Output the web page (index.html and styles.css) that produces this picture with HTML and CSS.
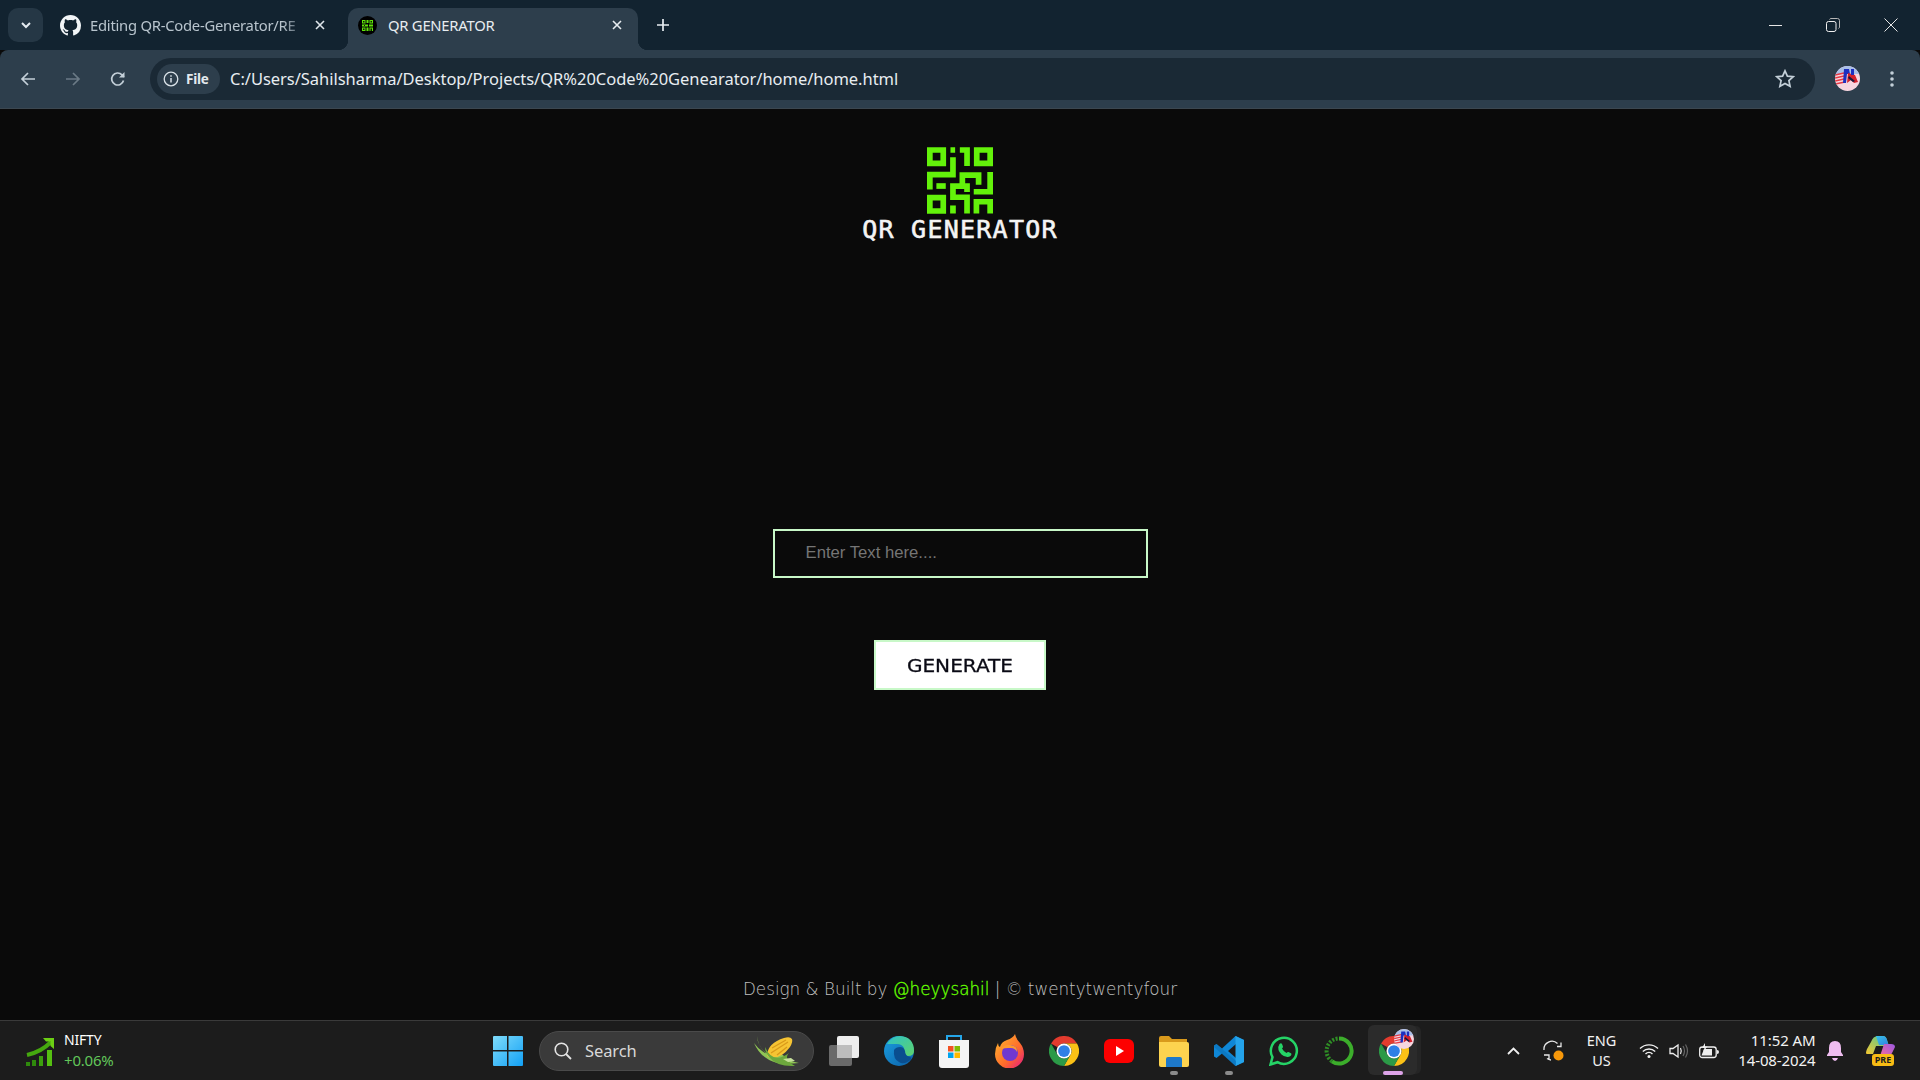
FILE: index.html
```html
<!DOCTYPE html>
<html lang="en">
<head>
<meta charset="utf-8">
<title>QR GENERATOR</title>
<link rel="stylesheet" href="styles.css">
</head>
<body>
<svg class="defs" width="0" height="0" aria-hidden="true">
  <symbol id="chrome" viewBox="0 0 48 48">
    <path fill="#e33b2e" d="M3.2 12A24 24 0 0 1 44.8 12H24A12 12 0 0 0 13.6 18Z"/>
    <path fill="#fbc116" d="M44.8 12A24 24 0 0 1 24 48L34.4 30A12 12 0 0 0 34.4 18 12 12 0 0 0 24 12Z"/>
    <path fill="#2b9a47" d="M24 48A24 24 0 0 1 3.2 12L13.6 30A12 12 0 0 0 34.4 30Z"/>
    <circle cx="24" cy="24" r="12" fill="#fff"/>
    <circle cx="24" cy="24" r="9.4" fill="#2f7fe6"/>
  </symbol>
  <symbol id="avatar" viewBox="0 0 25 25">
    <clipPath id="avclip"><circle cx="12.5" cy="12.5" r="12.5"/></clipPath>
    <g clip-path="url(#avclip)">
      <rect width="25" height="25" fill="#f6d5df"/>
      <rect width="25" height="8" fill="#a9bfe8"/>
      <path stroke="#e63a45" stroke-width="1.5" d="M0 9 9 7M0 12 9 10M0 15 9 13M0 18 10 16"/>
      <path fill="#1c2fc0" d="M9 3h5l1 5h-3l-1 9H8z"/>
      <path fill="#d3202c" d="M13 7l7 2 3 7-4 1-3-3-4 3z"/>
      <path fill="#1c2fc0" d="M16 3h3v6h-3z"/>
      <path fill="#15193f" d="M14 10l6 5-2 1-5-4z"/>
    </g>
  </symbol>
</svg>

<header class="tabstrip">
  <button class="tab-search" aria-label="Search tabs">
    <svg width="12" height="8" viewBox="0 0 12 8"><path d="M2 2l4 4 4-4" fill="none" stroke="#e4ebf0" stroke-width="2"/></svg>
  </button>
  <div class="tab tab-idle">
    <svg class="fav-gh" viewBox="0 0 16 16" width="21" height="21"><path fill="#f2f5f7" d="M8 0C3.58 0 0 3.58 0 8c0 3.54 2.29 6.53 5.47 7.59.4.07.55-.17.55-.38 0-.19-.01-.82-.01-1.49-2.01.37-2.53-.49-2.69-.94-.09-.23-.48-.94-.82-1.13-.28-.15-.68-.52-.01-.53.63-.01 1.08.58 1.23.82.72 1.21 1.87.87 2.33.66.07-.52.28-.87.51-1.07-1.78-.2-3.64-.89-3.64-3.95 0-.87.31-1.59.82-2.15-.08-.2-.36-1.02.08-2.12 0 0 .67-.21 2.2.82.64-.18 1.32-.27 2-.27s1.36.09 2 .27c1.53-1.04 2.2-.82 2.2-.82.44 1.1.16 1.92.08 2.12.51.56.82 1.27.82 2.15 0 3.07-1.87 3.75-3.65 3.95.29.25.54.73.54 1.48 0 1.07-.01 1.93-.01 2.2 0 .21.15.46.55.38A8.01 8.01 0 0 0 16 8c0-4.42-3.58-8-8-8z"/></svg>
    <span class="tab-title tab-title-fade">Editing QR-Code-Generator/RE</span>
    <svg class="tab-x" width="10" height="10" viewBox="0 0 10 10"><path d="M1 1l8 8M9 1l-8 8" stroke="#dfe6eb" stroke-width="1.6"/></svg>
  </div>
  <div class="tab tab-active">
    <span class="fav-qr"><svg width="11" height="11" viewBox="0 0 11 11"><path fill="#5fe30a" d="M0 0h3.500v3.500H0zM7.500 0H11v3.500H7.500zM0 7.500h3.500V11H0zM4.500 0h2v3h-2zM0 4.500h6v2H0zM7 4.500h4v2H7zM4.500 7.500h2V11h-2zM7.500 7.500H11V11H7.500z"/><path fill="#0a2000" d="M1 1h1.500v1.500H1zM8.500 1H10v1.500H8.500zM1 8.500h1.500V10H1zM2 5h1v1H2zM8.500 8.500H10V11H8.500z"/></svg></span>
    <span class="tab-title tab-title-on">QR GENERATOR</span>
    <svg class="tab-x" width="10" height="10" viewBox="0 0 10 10"><path d="M1 1l8 8M9 1l-8 8" stroke="#e8edf1" stroke-width="1.6"/></svg>
  </div>
  <svg class="new-tab" width="14" height="14" viewBox="0 0 14 14"><path d="M7 1v12M1 7h12" stroke="#e8edf1" stroke-width="1.7"/></svg>
  <div class="win-controls">
    <svg width="13" height="13" viewBox="0 0 13 13"><path d="M0 6.500h13" stroke="#e6e6e6"/></svg>
    <svg width="14" height="14" viewBox="0 0 14 14"><rect x=".5" y="3.5" width="9.5" height="10" rx="2" fill="none" stroke="#f0f0f0"/><path d="M3.5 1.5Q4 .5 5 .5h6.500q2 0 2 2V9q0 1-1 1.500" fill="none" stroke="#b5b5b5"/></svg>
    <svg width="14" height="14" viewBox="0 0 14 14"><path d="M.5.5l13 13M13.500.5l-13 13" stroke="#e6e6e6"/></svg>
  </div>
</header>

<nav class="toolbar">
  <svg class="nav-ic" width="16" height="16" viewBox="0 0 16 16"><path d="M15 8H2M8 2L2 8l6 6" fill="none" stroke="#c3cfd8" stroke-width="1.7"/></svg>
  <svg class="nav-ic" width="16" height="16" viewBox="0 0 16 16"><path d="M1 8h13M8 2l6 6-6 6" fill="none" stroke="#6b7a86" stroke-width="1.7"/></svg>
  <svg class="nav-ic" width="16" height="16" viewBox="0 0 16 16"><path d="M13.500 9.500A6 6 0 1 1 12 3.800L14 5.800" fill="none" stroke="#c3cfd8" stroke-width="1.7"/><path d="M14.500 1v5.500H9z" fill="#c3cfd8"/></svg>
  <div class="omnibox">
    <div class="chip">
      <svg width="16" height="16" viewBox="0 0 16 16"><circle cx="8" cy="8" r="6.800" fill="none" stroke="#d9e1e7" stroke-width="1.300"/><path d="M8 7v4.500M8 4.200v1.500" stroke="#d9e1e7" stroke-width="1.500"/></svg>
      <span class="chip-text">File</span>
    </div>
    <span class="url">C:/Users/Sahilsharma/Desktop/Projects/QR%20Code%20Genearator/home/home.html</span>
    <svg class="star" width="20" height="19" viewBox="0 0 20 19"><path d="M10 1.800l2.400 5.300 5.800.6-4.300 3.900 1.200 5.700L10 14.400l-5.100 2.900 1.200-5.700L1.800 7.700l5.800-.6z" fill="none" stroke="#c3cfd8" stroke-width="1.700"/></svg>
  </div>
  <svg class="avatar" width="25" height="25"><use href="#avatar"/></svg>
  <svg class="dots" width="4" height="16" viewBox="0 0 4 16"><circle cx="2" cy="2" r="1.800" fill="#c3cfd8"/><circle cx="2" cy="8" r="1.800" fill="#c3cfd8"/><circle cx="2" cy="14" r="1.800" fill="#c3cfd8"/></svg>
</nav>

<main class="page">
  <div class="brand">
    <svg class="qr-logo" width="66" height="67" viewBox="22 16 197 199">
      <g fill="none" stroke="#63f20a" stroke-width="17">
        <path d="M30.500 24.500h40v40h-40zM170.500 24.500h40v40h-40zM30.500 166.500h40v40h-40z"/>
        <path d="M92 24.500h14M120 24.500h21.500V72"/>
        <path d="M99.500 46v52H30.500v44"/>
        <path d="M50 132h28"/>
        <path d="M176 128V99.500H127.500V132H99.500v33.500h42V214"/>
        <path d="M127 132h14.500v18"/>
        <path d="M210.500 90v59h-49"/>
        <path d="M99.500 190v24"/>
        <path d="M169.500 214v-35h41v35"/>
      </g>
    </svg>
    <div class="brand-name">QR GENERATOR</div>
  </div>

  <form class="qr-form">
    <input class="qr-input" type="text" placeholder="Enter Text here....">
    <button class="qr-button" type="button"><span class="qr-button-text">GENERATE</span></button>
  </form>

  <footer class="credit">Design &amp; Built by <span class="credit-link">@heyysahil</span> | © twentytwentyfour</footer>
</main>

<div class="taskbar">
  <div class="widget">
    <svg width="30" height="30" viewBox="0 0 30 30">
      <path d="M2 19Q16 16 26 6" fill="none" stroke="#45a80f" stroke-width="4"/>
      <path d="M18 2h11v11l-3.500-3V5.500H21z" fill="#6ccf14"/>
      <path fill="#2f8a0c" d="M1 26h4v4H1zM7 24h4v6H7z"/>
      <path fill="#3da00e" d="M14 20h4v10h-4z"/>
      <path fill="#55c011" d="M22 14h5v16h-5z"/>
    </svg>
    <div class="widget-text">
      <span class="widget-name">NIFTY</span>
      <span class="widget-val">+0.06%</span>
    </div>
  </div>

  <svg class="start" width="30" height="30" viewBox="0 0 30 30">
    <defs><linearGradient id="winb" x1="0" y1="0" x2="1" y2="1"><stop offset="0" stop-color="#7fdcfb"/><stop offset="1" stop-color="#12a0f5"/></linearGradient></defs>
    <path fill="url(#winb)" d="M1 0h13v14H0V1q0-1 1-1zM15.500 0H29q1 0 1 1v13H15.500zM0 15.500h14V30H1q-1 0-1-1zM15.500 15.500H30V29q0 1-1 1H15.500z"/>
  </svg>

  <div class="search">
    <svg width="18" height="18" viewBox="0 0 18 18"><circle cx="7.500" cy="7.500" r="6.300" fill="none" stroke="#e4e4e4" stroke-width="1.600"/><path d="M12 12l5 5" stroke="#e4e4e4" stroke-width="1.800"/></svg>
    <span class="search-text">Search</span>
    <svg class="corn" width="48" height="32" viewBox="0 0 48 32">
      <path d="M4 1Q5 14 20 24L10 15Q4 8 4 1z" fill="#8cc152"/>
      <path d="M1 8Q8 24 24 28 34 29 46 28 34 26 30 20L12 18Q5 14 1 8z" fill="#8fc455"/>
      <path d="M14 20Q15 8 31 3q6-2 8 1 1 3-2 8-8 11-18 11-4 0-5-3z" fill="#f6c433"/>
      <path d="M19 13l14-8M18 18l17-11M24 20l10-8" stroke="#d99a1a" stroke-width="1.300"/>
      <path d="M12 12Q20 30 36 18 30 24 42 31 24 32 16 22q-4-5-4-10z" fill="#6da83d"/>
      <path d="M30 24l8-1 4 3-7 1z" fill="#c6e09c"/>
    </svg>
  </div>

  <div class="apps">
    <div class="app">
      <svg width="30" height="30" viewBox="0 0 30 30"><rect y="9" width="23" height="21" rx="2" fill="#6a6a6a"/><rect x="8" width="22" height="22" rx="2" fill="#eeeeee"/><rect x="8" y="9" width="15" height="13" fill="#bdbdbd"/></svg>
    </div>
    <div class="app">
      <svg width="30" height="30" viewBox="0 0 30 30">
        <defs>
          <linearGradient id="edgeA" x1="0" y1="0" x2="1" y2="1"><stop offset="0" stop-color="#2fc2c7"/><stop offset="1" stop-color="#5ed36b"/></linearGradient>
          <linearGradient id="edgeB" x1="0" y1="0" x2="1" y2="1"><stop offset="0" stop-color="#1b9fe0"/><stop offset="1" stop-color="#0b5fa8"/></linearGradient>
        </defs>
        <circle cx="15" cy="15" r="15" fill="url(#edgeB)"/>
        <path d="M3 8Q8 0 16 0q14 1 14 15 0 5-6 5-6 0-5-3 2-2 1-5-2-4-7-4-6 0-10 0z" fill="url(#edgeA)"/>
        <path d="M10 14q2-3 6-3 4 0 5 4 0 5 5 6 3 1-1 4-6 4-10 1-6-3-5-12z" fill="#0a4e8f"/>
      </svg>
    </div>
    <div class="app">
      <svg width="30" height="34" viewBox="0 0 30 34"><path d="M8 7V2h14v5" fill="none" stroke="#25a6e8" stroke-width="2"/><path d="M0 6h30v25q0 3-3 3H3q-3 0-3-3z" fill="#f4f4f4"/><path fill="#f25022" d="M9 12h5.500v5.500H9z"/><path fill="#7fba00" d="M15.500 12H21v5.500h-5.500z"/><path fill="#00a4ef" d="M9 18.500h5.500V24H9z"/><path fill="#ffb900" d="M15.500 18.500H21V24h-5.500z"/></svg>
    </div>
    <div class="app">
      <svg width="29" height="34" viewBox="0 0 29 34">
        <defs><linearGradient id="fx" x1="0" y1="0" x2="1" y2="1"><stop offset="0" stop-color="#ffbd2e"/><stop offset=".6" stop-color="#ff6a2b"/><stop offset="1" stop-color="#e31587"/></linearGradient></defs>
        <path d="M20 0q1 5 5 9 4 5 4 11a14 14 0 0 1-29 0Q0 14 3 9q0 3 2 4 1-5 7-7 6-2 8-6z" fill="url(#fx)"/>
        <circle cx="15" cy="19" r="8" fill="#7038d0"/>
        <path d="M6 15q4-5 9-4 8 1 7 7-2-4-6-4h-3q-3 0-7 1z" fill="#ff9a2e"/>
      </svg>
    </div>
    <div class="app"><svg width="30" height="30"><use href="#chrome"/></svg></div>
    <div class="app">
      <svg width="30" height="24" viewBox="0 0 30 24"><rect width="30" height="24" rx="6" fill="#fd0000"/><path d="M12 7l8 5-8 5z" fill="#fff"/></svg>
    </div>
    <div class="app app-open">
      <svg width="30" height="32" viewBox="0 0 30 32"><path d="M0 3q0-2 2-2h8l3 3h15v8H0z" fill="#d99a1c"/><path d="M0 7h28q2 0 2 2v21q0 2-2 2H2q-2 0-2-2z" fill="#fdd34f"/><path d="M7 24q0-2 2-2h12q2 0 2 2v8H7z" fill="#1e79c9"/></svg>
    </div>
    <div class="app app-open">
      <svg width="30" height="30" viewBox="0 0 30 30"><path d="M21.500 0L30 4v22l-8.500 4L8 17.500 2.500 22 0 20.500V9.500L2.500 8 8 12.500zM22 8l-8 7 8 7z" fill="#0f87d6" fill-rule="evenodd"/><path d="M21.500 0L30 4v22l-8.500 4z" fill="#24a3ea"/><path d="M0 9.500L2.500 8l19.500 17v5h-.5L0 11z" fill="#0a6fb5" opacity=".6"/></svg>
    </div>
    <div class="app">
      <svg width="30" height="30" viewBox="0 0 30 30"><path d="M1.500 28.500l2-7.300A13 13 0 1 1 8.500 26.200z" fill="none" stroke="#25d366" stroke-width="2.500"/><path d="M10.500 8c1-1 2-1 2.500 0l1 2.500q.2 1-1 2 1.500 3 4.500 4.500 1-1.200 2-1l2.500 1.200q1 .6 0 2.300-1.500 2-4.500 1.300Q11.500 19.500 9.500 14 8.700 10.500 10.500 8z" fill="#25d366"/></svg>
    </div>
    <div class="app">
      <svg width="30" height="30" viewBox="0 0 30 30"><path d="M15 2.500A12.500 12.500 0 1 1 8 25.300" fill="none" stroke="#3cae2b" stroke-width="4"/><path d="M8 25.300A12.500 12.500 0 0 1 15 2.500" fill="none" stroke="#2f8f25" stroke-width="4" stroke-dasharray="2 1.500"/></svg>
    </div>
    <div class="app app-active">
      <svg width="30" height="30"><use href="#chrome"/></svg>
      <svg class="app-badge" width="20" height="20"><use href="#avatar"/></svg>
    </div>
  </div>

  <div class="tray">
    <div class="tray-cell cell-chev"><svg width="13" height="8" viewBox="0 0 13 8"><path d="M1 7l5.500-5.500L12 7" fill="none" stroke="#f0f0f0" stroke-width="1.800"/></svg></div>
    <div class="tray-cell cell-sync">
      <svg width="22" height="22" viewBox="0 0 22 22"><path d="M1 10A8 8 0 0 1 14.500 3.500M18 2.500V6.500H14" fill="none" stroke="#e8e8e8" stroke-width="1.300"/><path d="M4 18.500A8 8 0 0 0 8 20M1 15h5v4" fill="none" stroke="#e8e8e8" stroke-width="1.300"/><circle cx="15.500" cy="15.500" r="5" fill="#f7980a"/></svg>
    </div>
    <div class="tray-cell cell-lang"><span>ENG</span><span>US</span></div>
    <div class="tray-cell cell-ic">
      <svg width="20" height="15" viewBox="0 0 20 15"><path d="M1 5.500a13 13 0 0 1 18 0M3.800 8.500a9 9 0 0 1 12.400 0M6.500 11a5 5 0 0 1 7 0" fill="none" stroke="#f0f0f0" stroke-width="1.400"/><circle cx="10" cy="13.500" r="1.500" fill="#f0f0f0"/></svg>
    </div>
    <div class="tray-cell cell-ic">
      <svg width="20" height="16" viewBox="0 0 20 16"><path d="M1 5.500h3L9 2v12L4 10.500H1z" fill="none" stroke="#eee" stroke-width="1.300"/><path d="M11.500 5q1.500 3 0 6" fill="none" stroke="#eee" stroke-width="1.200"/><path d="M14 3q3 5 0 10M16.500 1.500q4 6.500 0 13" fill="none" stroke="#666" stroke-width="1.200"/></svg>
    </div>
    <div class="tray-cell cell-ic">
      <svg width="20" height="16" viewBox="0 0 20 16"><rect x=".7" y="4" width="16.500" height="10.500" rx="2.500" fill="none" stroke="#eee" stroke-width="1.300"/><path d="M2.500 12.500L5 6h8v6.500z" fill="#eee"/><path d="M18 7v4q2 0 2-2t-2-2z" fill="#eee"/><path d="M6 0L3 5h2.500L4 9l4.500-5.500H6z" fill="#eee"/></svg>
    </div>
    <div class="clock"><span>11:52 AM</span><span>14-08-2024</span></div>
    <div class="tray-cell cell-bell">
      <svg width="16" height="20" viewBox="0 0 16 20"><path d="M8 0q6 0 6 7v4l2 3v1H0v-1l2-3V7q0-7 6-7z" fill="#efbdf0"/><path d="M5 17h6q-1 3-3 3t-3-3z" fill="#efbdf0"/></svg>
    </div>
    <div class="tray-cell cell-copilot">
      <div class="copilot">
        <svg width="29" height="22" viewBox="0 0 29 22">
          <defs>
            <linearGradient id="coA" x1="0" y1="0" x2="1" y2="1"><stop offset="0" stop-color="#38c3e8"/><stop offset="1" stop-color="#2f7fe0"/></linearGradient>
            <linearGradient id="coB" x1="0" y1="1" x2="1" y2="0"><stop offset="0" stop-color="#f56a9d"/><stop offset="1" stop-color="#9a59e3"/></linearGradient>
            <linearGradient id="coC" x1="0" y1="1" x2="1" y2="0"><stop offset="0" stop-color="#f6c72f"/><stop offset="1" stop-color="#46c99a"/></linearGradient>
          </defs>
          <path d="M5 6Q7 0 12 0h5q3 0 4 4l2 6H10l-3 8H1Q-1 18 1 13z" fill="url(#coC)"/>
          <path d="M10 0h7q3 0 4 4l1.500 5H13z" fill="url(#coA)"/>
          <path d="M18 8h7q4 0 4 3l-3 6q-1 3-5 3h-7z" fill="url(#coB)"/>
        </svg>
        <span class="pre">PRE</span>
      </div>
    </div>
  </div>
</div>
</body>
</html>
```

FILE: styles.css
```css
* { box-sizing: border-box; }
html, body { margin: 0; height: 100%; }
body {
  display: flex;
  flex-direction: column;
  height: 1080px;
  overflow: hidden;
  background: #0a0a0a;
  font-family: "Noto Sans", "Open Sans", sans-serif;
}
.defs { position: absolute; }

/* tab strip */
.tabstrip {
  height: 50px;
  flex: none;
  display: flex;
  align-items: flex-end;
  padding-left: 8px;
  background: #122330;
}
.tab-search {
  width: 35px;
  height: 34px;
  margin-bottom: 8px;
  border: 0;
  border-radius: 10px;
  background: #253745;
  display: flex;
  align-items: center;
  justify-content: center;
  padding: 0;
}
.tab {
  position: relative;
  height: 42px;
  display: flex;
  align-items: center;
  padding: 0 12px 8px;
}
.tab-idle { width: 300px; margin-left: 5px; padding-right: 23px; }
.fav-gh { flex: none; }
.tab-title {
  flex: 1;
  min-width: 0;
  white-space: nowrap;
  font-size: 14.8px;
  letter-spacing: -0.25px;
  margin-left: 9px;
}
.tab-title-fade {
  color: #b8c4cd;
  -webkit-mask-image: linear-gradient(to right, #000 88%, transparent 100%);
  mask-image: linear-gradient(to right, #000 88%, transparent 100%);
}
.tab-title-on { color: #e8edf1; margin-left: 11px; }
.tab-x { flex: none; margin-left: 6px; }
.tab-active {
  width: 290px;
  background: #2d3e4c;
  border-radius: 10px 10px 0 0;
  padding-left: 10px;
  padding-right: 16px;
}
.tab-active::before,
.tab-active::after {
  content: "";
  position: absolute;
  bottom: 0;
  width: 10px;
  height: 10px;
}
.tab-active::before {
  left: -10px;
  background: radial-gradient(circle at 0 0, transparent 10px, #2d3e4c 10.500px);
}
.tab-active::after {
  right: -10px;
  background: radial-gradient(circle at 100% 0, transparent 10px, #2d3e4c 10.500px);
}
.fav-qr {
  width: 19px;
  height: 19px;
  flex: none;
  border-radius: 50%;
  background: #000;
  display: flex;
  align-items: center;
  justify-content: center;
}
.new-tab { flex: none; margin: 0 0 18px 18px; }
.win-controls {
  margin-left: auto;
  align-self: flex-start;
  display: flex;
  align-items: center;
  gap: 44px;
  padding: 18px 22px 0 0;
}

/* toolbar */
.toolbar {
  height: 59px;
  flex: none;
  display: flex;
  align-items: center;
  background: #2d3e4c;
  border-bottom: 1px solid #3c4750;
  border-radius: 8px 8px 0 0;
  padding-left: 20px;
  padding-bottom: 1px;
}
.nav-ic { flex: none; margin-right: 29px; }
.omnibox {
  width: 1665px;
  height: 42px;
  margin-left: -5px;
  flex: none;
  display: flex;
  align-items: center;
  border-radius: 21px;
  background: #1a2935;
  padding: 0 20px 0 7px;
}
.chip {
  width: 63px;
  height: 30px;
  flex: none;
  border-radius: 15px;
  background: #2d3e4c;
  display: flex;
  align-items: center;
  gap: 7px;
  padding-left: 6px;
}
.chip-text { color: #e3e9ee; font-size: 13.500px; font-weight: 700; letter-spacing: -0.2px; }
.url {
  flex: 1;
  margin-left: 10px;
  color: #e8edf1;
  font-size: 16.500px;
  letter-spacing: -0.03px;
  white-space: nowrap;
}
.star { flex: none; }
.avatar { flex: none; margin-left: 20px; }
.dots { flex: none; margin-left: 30px; }

/* page */
.page {
  flex: 1;
  min-height: 0;
  display: flex;
  flex-direction: column;
  align-items: center;
  background: #0a0a0a;
  padding-top: 38px;
}
.brand { display: flex; flex-direction: column; align-items: center; }
.qr-logo { display: block; }
.brand-name {
  margin-top: 0;
  color: #f4f4f4;
  font-family: "DejaVu Sans Mono", monospace;
  font-size: 25px;
  line-height: 31px;
  letter-spacing: 1.250px;
  -webkit-text-stroke: 0.6px #f4f4f4;
  white-space: nowrap;
}
.qr-form {
  margin-top: 284px;
  display: flex;
  flex-direction: column;
  align-items: center;
  gap: 62px;
}
.qr-input {
  width: 375px;
  height: 49px;
  border: 2px solid #c8f8c8;
  background: transparent;
  color: #eee;
  padding: 0 0 2px 31px;
  font-family: "Liberation Sans", Arial, sans-serif;
  font-size: 16.700px;
  outline: 0;
}
.qr-input::placeholder { color: #757575; opacity: 1; }
.qr-button {
  width: 172px;
  height: 50px;
  border: 2px solid #c8f8c8;
  background: #fff;
  color: #0a0a14;
  font-family: "DejaVu Sans", sans-serif;
  font-size: 17px;
  padding: 1px 0 0;
}
.qr-button-text {
  display: inline-block;
  transform: scaleX(1.180);
  -webkit-text-stroke: 0.3px #0a0a14;
}
.credit {
  margin-top: auto;
  margin-bottom: 20px;
  color: #c0c0c0;
  font-family: "DejaVu Sans", sans-serif;
  font-weight: 200;
  font-size: 16.800px;
  line-height: 21px;
  white-space: nowrap;
}
.credit-link { color: #66ff00; -webkit-text-stroke: 0.3px #66ff00; }

/* taskbar */
.taskbar {
  height: 60px;
  flex: none;
  display: flex;
  align-items: center;
  background: #1c1c1c;
  border-top: 1px solid #3a3a3a;
  font-family: "Noto Sans", "Open Sans", sans-serif;
}
.widget {
  width: 493px;
  flex: none;
  display: flex;
  align-items: center;
  gap: 9px;
  padding-left: 25px;
}
.widget-text { display: flex; flex-direction: column; padding-bottom: 2px; }
.widget-name { color: #fff; font-size: 14px; line-height: 21px; letter-spacing: -0.2px; }
.widget-val { color: #62c65a; font-size: 15px; line-height: 21px; letter-spacing: -0.2px; }
.start { flex: none; margin-right: 16px; }
.search {
  width: 275px;
  height: 40px;
  flex: none;
  display: flex;
  align-items: center;
  border-radius: 20px;
  border: 1px solid #4a4a4a;
  background: #3a3a3a;
  padding: 0 12px 0 14px;
}
.search-text { flex: 1; margin-left: 13px; padding-bottom: 1px; color: #d8d8d8; font-size: 16.500px; letter-spacing: -0.1px; }
.corn { flex: none; }
.apps {
  display: flex;
  flex: none;
  margin-left: 2.500px;
}
.app {
  position: relative;
  width: 55px;
  height: 59px;
  display: flex;
  align-items: center;
  justify-content: center;
}
.app-open::after {
  content: "";
  position: absolute;
  left: 23.500px;
  bottom: 5px;
  width: 8px;
  height: 4px;
  border-radius: 2px;
  background: #8b8b8b;
}
.app-active::before {
  content: "";
  position: absolute;
  left: 1px;
  right: 5px;
  top: 4px;
  bottom: 5px;
  border-radius: 6px;
  background: #2b2b2b;
  box-shadow: 5px 0 0 -1px #252525;
}
.app-active::after {
  content: "";
  position: absolute;
  left: 16px;
  bottom: 5px;
  width: 20px;
  height: 4px;
  border-radius: 2px;
  background: #dda3e8;
}
.app-active > svg { position: relative; }
.app > .app-badge {
  position: absolute;
  top: 8px;
  left: 27px;
}
.tray {
  margin-left: 77px;
  flex: none;
  display: flex;
  align-items: center;
  color: #fff;
}
.tray-cell { display: flex; align-items: center; justify-content: center; }
.cell-chev { width: 30px; }
.cell-sync { width: 50px; }
.cell-lang {
  width: 46px;
  flex-direction: column;
  font-size: 14.500px;
  line-height: 20px;
  padding-bottom: 2px;
  color: #f2f2f2;
}
.cell-ic { width: 30px; }
.cell-lang + .cell-ic { margin-left: 9px; }
.clock {
  width: 92px;
  display: flex;
  flex-direction: column;
  align-items: flex-end;
  font-size: 15px;
  line-height: 20px;
  letter-spacing: -0.1px;
  padding-bottom: 2px;
  white-space: nowrap;
  color: #f2f2f2;
}
.cell-bell { width: 39px; }
.cell-copilot { width: 52px; }
.copilot {
  position: relative;
  width: 29px;
  height: 29px;
}
.copilot > svg { display: block; }
.pre {
  position: absolute;
  left: 6px;
  bottom: -1px;
  width: 22px;
  height: 12px;
  border-radius: 3px;
  background: #f8bc14;
  color: #1c1c1c;
  font-size: 9px;
  font-weight: 700;
  line-height: 12px;
  text-align: center;
}
```
